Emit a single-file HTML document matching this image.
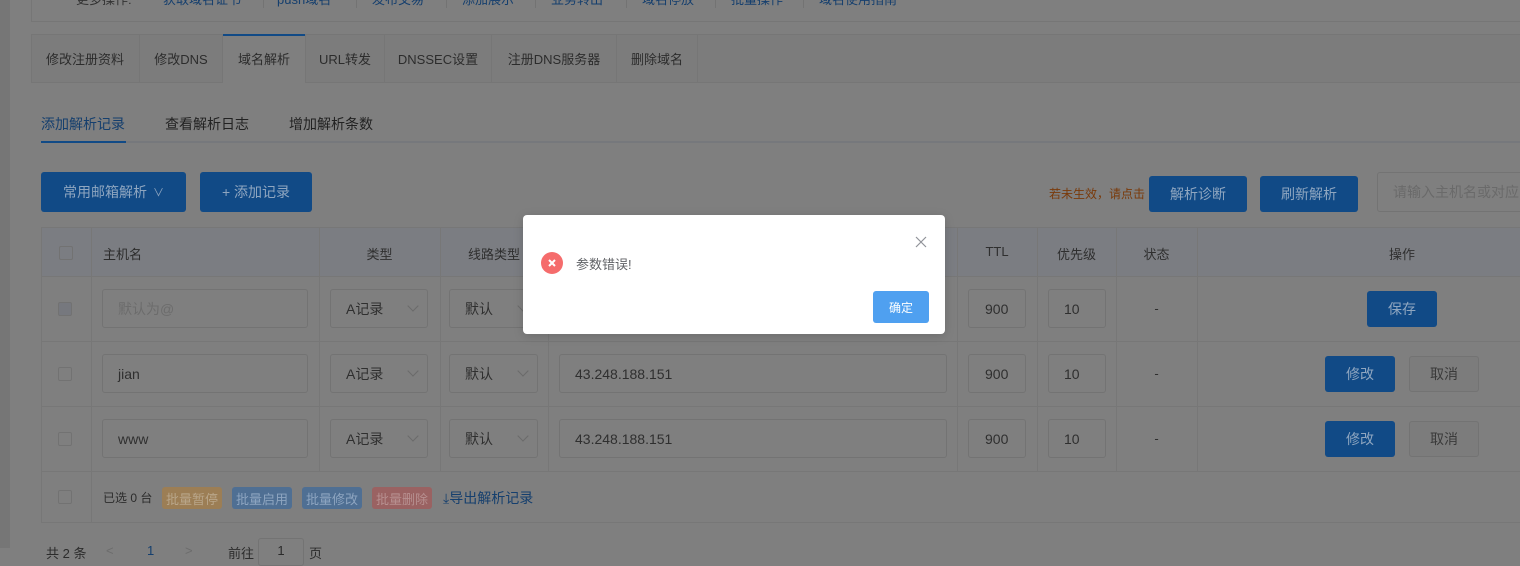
<!DOCTYPE html>
<html><head><meta charset="utf-8">
<style>
*{box-sizing:border-box;margin:0;padding:0}
body{width:1520px;height:548px;overflow:hidden;background:#7f7f7f;font-family:"Liberation Sans","Noto Sans CJK SC",sans-serif;font-size:13px;color:#2a2a2a;position:relative}
.a{position:absolute}
.btn{position:absolute;background:#114a86;border-radius:3px;color:#8fa6c0;font-size:14px;display:flex;align-items:center;justify-content:center}
.inp{position:absolute;border:1px solid #737373;border-radius:3px;height:39px;font-size:14px;color:#2f2f2f;display:flex;align-items:center;padding-left:15px}
.chev{position:absolute;right:10px;top:12px;width:8px;height:8px;border-right:1px solid #6a6a6a;border-bottom:1px solid #6a6a6a;transform:rotate(45deg)}
.cb{position:absolute;width:14px;height:14px;border:1px solid #727272;border-radius:2px}
.vl{position:absolute;width:1px;background:#777}
.hl{position:absolute;height:1px;background:#777}
.tag{position:absolute;top:487px;height:22px;border-radius:3px;font-size:13px;display:flex;align-items:center;justify-content:center;width:60px}
.ct{position:absolute;font-size:13px;color:#2f2f2f;text-align:center}
.tl{position:absolute;top:-11px;font-size:13px;color:#153f6e;white-space:nowrap}
.sp{position:absolute;top:-4px;width:1px;height:12px;background:#737373}
.tb{height:49px;border-right:1px solid #767676;display:flex;align-items:center;justify-content:center}
</style></head><body>
<div class="a" style="left:0;top:0;width:10px;height:548px;background:#767676"></div>
<!-- top box -->
<div class="a" style="left:31px;top:-10px;width:1500px;height:32px;border:1px solid #767676;border-top:none"></div>
<div class="a" style="left:76px;top:-11px;font-size:13px;color:#333;white-space:nowrap">更多操作:</div>
<div class="tl" style="left:163px">获取域名证书</div><div class="sp" style="left:263px"></div>
<div class="tl" style="left:277px">push域名</div><div class="sp" style="left:356px"></div>
<div class="tl" style="left:372px">发布交易</div><div class="sp" style="left:446px"></div>
<div class="tl" style="left:462px">添加展示</div><div class="sp" style="left:535px"></div>
<div class="tl" style="left:551px">业务转出</div><div class="sp" style="left:626px"></div>
<div class="tl" style="left:642px">域名停放</div><div class="sp" style="left:715px"></div>
<div class="tl" style="left:731px">批量操作</div><div class="sp" style="left:803px"></div>
<div class="tl" style="left:819px">域名使用指南</div>
<!-- tabs -->
<div class="a" style="left:31px;top:34px;width:1500px;height:49px;background:#7c7c7c;border:1px solid #767676"></div>
<div class="a" style="left:223px;top:34px;width:82px;height:49px;background:#7f7f7f;border-top:2px solid #114a86"></div>
<div class="a" style="top:34px;height:49px;left:31px;display:flex;font-size:13px;color:#2c2c2c">
<div class="tb" style="width:109px">修改注册资料</div>
<div class="tb" style="width:83px">修改DNS</div>
<div class="tb" style="width:82px;border-right:none">域名解析</div>
<div class="tb" style="width:80px;border-left:1px solid #767676">URL转发</div>
<div class="tb" style="width:107px">DNSSEC设置</div>
<div class="tb" style="width:125px">注册DNS服务器</div>
<div class="tb" style="width:81px">删除域名</div>
</div>
<!-- subtabs -->
<div class="a" style="left:41px;top:114px;font-size:14px;color:#153f6e">添加解析记录</div>
<div class="a" style="left:165px;top:114px;font-size:14px;color:#222">查看解析日志</div>
<div class="a" style="left:289px;top:114px;font-size:14px;color:#222">增加解析条数</div>
<div class="a" style="left:41px;top:141px;width:1480px;height:2px;background:#76787c"></div>
<div class="a" style="left:41px;top:141px;width:85px;height:2px;background:#114a86"></div>
<!-- toolbar -->
<div class="btn" style="left:41px;top:172px;width:145px;height:40px">常用邮箱解析 <span style="font-size:11px;margin-left:6px">∨</span></div>
<div class="btn" style="left:200px;top:172px;width:112px;height:40px">+ 添加记录</div>
<div class="a" style="left:1049px;top:185px;font-size:12px;color:#7a3a0a">若未生效，请点击</div>
<div class="btn" style="left:1149px;top:176px;width:98px;height:36px">解析诊断</div>
<div class="btn" style="left:1260px;top:176px;width:98px;height:36px">刷新解析</div>
<div class="inp" style="left:1377px;top:172px;width:160px;height:40px;color:#6a6a6a;font-size:14px">请输入主机名或对应</div>
<!-- table -->
<div class="a" style="left:41px;top:227px;width:1490px;height:50px;background:#7b7d82"></div>
<div class="a" style="left:41px;top:227px;width:1490px;height:296px;border:1px solid #777"></div>
<div class="hl" style="left:41px;top:276px;width:1490px"></div>
<div class="hl" style="left:41px;top:341px;width:1490px"></div>
<div class="hl" style="left:41px;top:406px;width:1490px"></div>
<div class="hl" style="left:41px;top:471px;width:1490px"></div>
<div class="vl" style="left:91px;top:227px;height:296px"></div>
<div class="vl" style="left:319px;top:227px;height:244px"></div>
<div class="vl" style="left:440px;top:227px;height:244px"></div>
<div class="vl" style="left:548px;top:227px;height:244px"></div>
<div class="vl" style="left:957px;top:227px;height:244px"></div>
<div class="vl" style="left:1037px;top:227px;height:244px"></div>
<div class="vl" style="left:1116px;top:227px;height:244px"></div>
<div class="vl" style="left:1197px;top:227px;height:244px"></div>
<div class="cb" style="left:59px;top:246px"></div>
<div class="a" style="left:103px;top:244px;font-size:13px;color:#2c2c2c">主机名</div>
<div class="ct" style="left:319px;width:121px;top:244px">类型</div>
<div class="ct" style="left:440px;width:108px;top:244px">线路类型</div>
<div class="ct" style="left:957px;width:80px;top:244px">TTL</div>
<div class="ct" style="left:1037px;width:79px;top:244px">优先级</div>
<div class="ct" style="left:1116px;width:81px;top:244px">状态</div>
<div class="ct" style="left:1197px;width:410px;top:244px">操作</div>
<!-- row1 -->
<div class="cb" style="left:58px;top:302px;background:#76787e"></div>
<div class="inp" style="left:102px;top:289px;width:206px;color:#6c6c6c">默认为@</div>
<div class="inp" style="left:330px;top:289px;width:98px">A记录<span class="chev"></span></div>
<div class="inp" style="left:449px;top:289px;width:89px">默认<span class="chev"></span></div>
<div class="inp" style="left:968px;top:289px;width:58px;padding-left:16px">900</div>
<div class="inp" style="left:1048px;top:289px;width:58px;padding-left:15px">10</div>
<div class="ct" style="left:1116px;width:81px;top:301px">-</div>
<div class="btn" style="left:1367px;top:291px;width:70px;height:36px">保存</div>
<!-- row2 -->
<div class="cb" style="left:58px;top:367px"></div>
<div class="inp" style="left:102px;top:354px;width:206px">jian</div>
<div class="inp" style="left:330px;top:354px;width:98px">A记录<span class="chev"></span></div>
<div class="inp" style="left:449px;top:354px;width:89px">默认<span class="chev"></span></div>
<div class="inp" style="left:559px;top:354px;width:388px">43.248.188.151</div>
<div class="inp" style="left:968px;top:354px;width:58px;padding-left:16px">900</div>
<div class="inp" style="left:1048px;top:354px;width:58px;padding-left:15px">10</div>
<div class="ct" style="left:1116px;width:81px;top:366px">-</div>
<div class="btn" style="left:1325px;top:356px;width:70px;height:36px">修改</div>
<div class="btn" style="left:1409px;top:356px;width:70px;height:36px;background:#7c7c7c;border:1px solid #737373;color:#3a3a3a">取消</div>
<!-- row3 -->
<div class="cb" style="left:58px;top:432px"></div>
<div class="inp" style="left:102px;top:419px;width:206px">www</div>
<div class="inp" style="left:330px;top:419px;width:98px">A记录<span class="chev"></span></div>
<div class="inp" style="left:449px;top:419px;width:89px">默认<span class="chev"></span></div>
<div class="inp" style="left:559px;top:419px;width:388px">43.248.188.151</div>
<div class="inp" style="left:968px;top:419px;width:58px;padding-left:16px">900</div>
<div class="inp" style="left:1048px;top:419px;width:58px;padding-left:15px">10</div>
<div class="ct" style="left:1116px;width:81px;top:431px">-</div>
<div class="btn" style="left:1325px;top:421px;width:70px;height:36px">修改</div>
<div class="btn" style="left:1409px;top:421px;width:70px;height:36px;background:#7c7c7c;border:1px solid #737373;color:#3a3a3a">取消</div>
<!-- footer -->
<div class="cb" style="left:58px;top:490px"></div>
<div class="a" style="left:103px;top:489px;font-size:12px;color:#2c2c2c">已选 0 台</div>
<div class="tag" style="left:162px;background:#9c7e55;color:#b9a68a">批量暂停</div>
<div class="tag" style="left:232px;background:#4f6f93;color:#8ea5c0">批量启用</div>
<div class="tag" style="left:302px;background:#4f6f93;color:#8ea5c0">批量修改</div>
<div class="tag" style="left:372px;background:#9a6262;color:#b79090">批量删除</div>
<div class="a" style="left:443px;top:488px;font-size:14px;color:#153f6e">⤓导出解析记录</div>
<!-- pagination -->
<div class="a" style="left:46px;top:543px;font-size:13px;color:#2c2c2c">共 2 条</div>
<div class="a" style="left:106px;top:543px;color:#6c6c6c">&lt;</div>
<div class="a" style="left:147px;top:543px;color:#153f6e">1</div>
<div class="a" style="left:185px;top:543px;color:#6c6c6c">&gt;</div>
<div class="a" style="left:228px;top:543px;color:#2c2c2c">前往</div>
<div class="a" style="left:258px;top:538px;width:46px;height:28px;border:1px solid #737373;border-radius:3px;text-align:center;padding-top:4px">1</div>
<div class="a" style="left:309px;top:543px;color:#2c2c2c">页</div>
<!-- modal -->
<div class="a" style="left:523px;top:215px;width:422px;height:119px;background:#fff;border-radius:4px;box-shadow:0 2px 10px rgba(0,0,0,.15)"></div>
<svg class="a" style="left:914px;top:235px" width="14" height="14" viewBox="0 0 14 14"><path d="M2 2L12 12M12 2L2 12" stroke="#909399" stroke-width="1.2"/></svg>
<div class="a" style="left:541px;top:252px;width:22px;height:22px;border-radius:50%;background:#f56c6c"></div>
<svg class="a" style="left:541px;top:252px" width="22" height="22" viewBox="0 0 22 22"><path d="M8 8L14 14M14 8L8 14" stroke="#fff" stroke-width="2"/></svg>
<div class="a" style="left:576px;top:254px;font-size:13px;color:#606266">参数错误!</div>
<div class="a" style="left:873px;top:291px;width:56px;height:32px;background:#4fa0f0;border-radius:3px;color:#fff;font-size:12px;display:flex;align-items:center;justify-content:center">确定</div>
</body></html>
